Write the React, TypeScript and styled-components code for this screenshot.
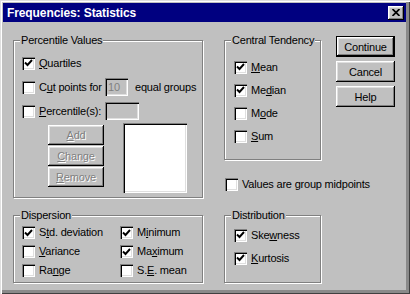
import styled, { createGlobalStyle } from "styled-components";

const Global = createGlobalStyle`
  html, body {
    margin: 0;
    padding: 0;
    background: #c0c0c0;
  }
  body {
    font-family: "Liberation Sans", Arial, sans-serif;
    font-size: 11px;
    letter-spacing: -0.2px;
    color: #000;
  }
`

const Window = styled.div`
  box-sizing: border-box;
  width: 410px;
  height: 294px;
  padding: 3px 4px 4px 3px;
  background: #c0c0c0;
  box-shadow: inset 1px 1px #dfdfdf, inset 2px 2px #fff,
    inset -1px -1px #404040, inset -4px -4px #8a8a8a;
`

const TitleBar = styled.div`
  display: flex;
  align-items: center;
  justify-content: space-between;
  height: 19px;
  padding: 0 2px 0 4px;
  background: #000080;
`

const Title = styled.span`
  color: #fff;
  font-weight: bold;
  font-size: 12px;
  letter-spacing: -0.1px;
`

const CloseBtn = styled.div`
  display: flex;
  align-items: center;
  justify-content: center;
  width: 16px;
  height: 14px;
  background: #c0c0c0;
  box-shadow: inset -1px -1px #000, inset 1px 1px #fff,
    inset -2px -2px #808080, inset 2px 2px #dfdfdf;
`

const Content = styled.div`
  display: grid;
  grid-template-columns: 190px 1fr;
  column-gap: 21px;
  row-gap: 17px;
  padding: 14px 0 0 10px;
`

const Group = styled.div<{ $w?: number; $h: number; $top?: number }>`
  position: relative;
  box-sizing: border-box;
  width: ${(p) => (p.$w ? `${p.$w}px` : "auto")};
  height: ${(p) => p.$h}px;
  margin-top: ${(p) => p.$top ?? 0}px;
  border: 1px solid #808080;
  box-shadow: inset 1px 1px #fff, 1px 1px #fff;
`

const Legend = styled.span`
  position: absolute;
  top: -7px;
  left: 6px;
  padding: 0 1px;
  line-height: 13px;
  background: #c0c0c0;
`

const Inner = styled.div<{ $pad: string; $gap?: number }>`
  display: flex;
  flex-direction: column;
  gap: ${(p) => p.$gap ?? 0}px;
  padding: ${(p) => p.$pad};
`

const Row = styled.div<{ $h: number }>`
  display: flex;
  align-items: center;
  height: ${(p) => p.$h}px;
`

const Label = styled.label<{ $w?: number }>`
  display: flex;
  align-items: center;
  gap: 4px;
  flex: none;
  width: ${(p) => (p.$w ? `${p.$w}px` : "auto")};
  white-space: nowrap;
  line-height: 13px;
`

const Box = styled.span`
  display: flex;
  align-items: center;
  justify-content: center;
  flex: none;
  width: 13px;
  height: 13px;
  background: #fff;
  box-shadow: inset 1px 1px #808080, inset 2px 2px #000,
    inset -1px -1px #fff, inset -2px -2px #dfdfdf;
`

const Key = styled.span`
  text-decoration: underline;
`

const Field = styled.div<{ $w: number }>`
  box-sizing: border-box;
  flex: none;
  width: ${(p) => p.$w}px;
  height: 18px;
  padding: 2px 0 0 3px;
  color: #808080;
  background: #c0c0c0;
  line-height: 14px;
  box-shadow: inset 1px 1px #808080, inset 2px 2px #000,
    inset -1px -1px #fff, inset -2px -2px #dfdfdf;
`

const Suffix = styled.span`
  margin-left: 7px;
  white-space: nowrap;
`

const ListArea = styled.div`
  display: flex;
  gap: 19px;
  margin: 2px 0 0 34px;
`

const SmallButtons = styled.div`
  display: flex;
  flex-direction: column;
  gap: 1px;
  margin-top: 2px;
`

const Button = styled.div<{ $w: number; $h: number; $default?: boolean; $disabled?: boolean }>`
  display: flex;
  align-items: center;
  justify-content: center;
  box-sizing: border-box;
  width: ${(p) => p.$w}px;
  height: ${(p) => p.$h}px;
  background: #c0c0c0;
  color: ${(p) => (p.$disabled ? "#808080" : "#000")};
  text-shadow: ${(p) => (p.$disabled ? "1px 1px 0 #fff" : "none")};
  border: ${(p) => (p.$default ? "1px solid #000" : "none")};
  box-shadow: inset -1px -1px #000, inset 1px 1px #fff,
    inset -2px -2px #808080, inset 2px 2px #dfdfdf;
`

const ListBox = styled.div`
  width: 64px;
  height: 70px;
  background: #fff;
  box-shadow: inset 1px 1px #808080, inset 2px 2px #000,
    inset -1px -1px #fff, inset -2px -2px #dfdfdf;
`

const RightTop = styled.div`
  display: flex;
  flex-direction: column;
`

const TopRow = styled.div`
  display: flex;
  align-items: flex-start;
  gap: 15px;
`

const ButtonCol = styled.div`
  display: flex;
  flex-direction: column;
  gap: 4px;
`

const ValuesRow = styled(Row)`
  margin: 14px 0 0 1px;
`

const DispGrid = styled.div`
  display: grid;
  grid-template-columns: 98px auto;
  grid-auto-rows: 19px;
  align-items: center;
  padding: 7px 0 0 8px;
`

const Tick = () => (
  <svg width="9" height="8" viewBox="0 0 9 8">
    <path d="M1 3.5 L3.5 6 L8 1" fill="none" stroke="#000" strokeWidth="1.9" />
  </svg>
);

type CheckProps = { checked?: boolean; w?: number; children: React.ReactNode };

const Check = ({ checked, w, children }: CheckProps) => (
  <Label $w={w}>
    <Box>{checked && <Tick />}</Box>
    <span>{children}</span>
  </Label>
);

const App = () => {
  return (
    <Window>
      <Global />
      <TitleBar>
        <Title>Frequencies: Statistics</Title>
        <CloseBtn>
          <svg width="8" height="7" viewBox="0 0 8 7">
            <path d="M0.5 0 L7.5 7 M7.5 0 L0.5 7" stroke="#000" strokeWidth="1.7" />
          </svg>
        </CloseBtn>
      </TitleBar>
      <Content>
        <Group $h={158} $top={4}>
          <Legend>Percentile Values</Legend>
          <Inner $pad="12px 0 0 8px" $gap={4}>
            <Row $h={20}>
              <Check checked>
                <Key>Q</Key>uartiles
              </Check>
            </Row>
            <Row $h={20}>
              <Check w={83}>
                C<Key>u</Key>t points for
              </Check>
              <Field $w={23}>10</Field>
              <Suffix>equal groups</Suffix>
            </Row>
            <Row $h={20}>
              <Check w={83}>
                <Key>P</Key>ercentile(s):
              </Check>
              <Field $w={34} />
            </Row>
          </Inner>
          <ListArea>
            <SmallButtons>
              <Button $w={56} $h={20} $disabled>
                <span><Key>A</Key>dd</span>
              </Button>
              <Button $w={56} $h={20} $disabled>
                <span><Key>C</Key>hange</span>
              </Button>
              <Button $w={56} $h={20} $disabled>
                <span><Key>R</Key>emove</span>
              </Button>
            </SmallButtons>
            <ListBox />
          </ListArea>
        </Group>

        <RightTop>
          <TopRow>
            <Group $w={97} $h={120} $top={4}>
              <Legend>Central Tendency</Legend>
              <Inner $pad="16px 0 0 9px" $gap={3}>
                <Row $h={20}>
                  <Check checked>
                    <Key>M</Key>ean
                  </Check>
                </Row>
                <Row $h={20}>
                  <Check checked>
                    Me<Key>d</Key>ian
                  </Check>
                </Row>
                <Row $h={20}>
                  <Check>
                    M<Key>o</Key>de
                  </Check>
                </Row>
                <Row $h={20}>
                  <Check>
                    <Key>S</Key>um
                  </Check>
                </Row>
              </Inner>
            </Group>
            <ButtonCol>
              <Button $w={59} $h={21} $default>Continue</Button>
              <Button $w={59} $h={21}>Cancel</Button>
              <Button $w={59} $h={21}>Help</Button>
            </ButtonCol>
          </TopRow>
          <ValuesRow $h={20}>
            <Check>Values are group midpoints</Check>
          </ValuesRow>
        </RightTop>

        <Group $h={68}>
          <Legend>Dispersion</Legend>
          <DispGrid>
            <Check checked>
              S<Key>t</Key>d. deviation
            </Check>
            <Check checked>
              M<Key>i</Key>nimum
            </Check>
            <Check>
              <Key>V</Key>ariance
            </Check>
            <Check checked>
              Ma<Key>x</Key>imum
            </Check>
            <Check>
              Ra<Key>n</Key>ge
            </Check>
            <Check>
              S.<Key>E</Key>. mean
            </Check>
          </DispGrid>
        </Group>

        <Group $w={97} $h={68}>
          <Legend>Distribution</Legend>
          <Inner $pad="9px 0 0 9px" $gap={3}>
            <Row $h={20}>
              <Check checked>
                Ske<Key>w</Key>ness
              </Check>
            </Row>
            <Row $h={20}>
              <Check checked>
                <Key>K</Key>urtosis
              </Check>
            </Row>
          </Inner>
        </Group>
      </Content>
    </Window>
  );
};

export default App;
